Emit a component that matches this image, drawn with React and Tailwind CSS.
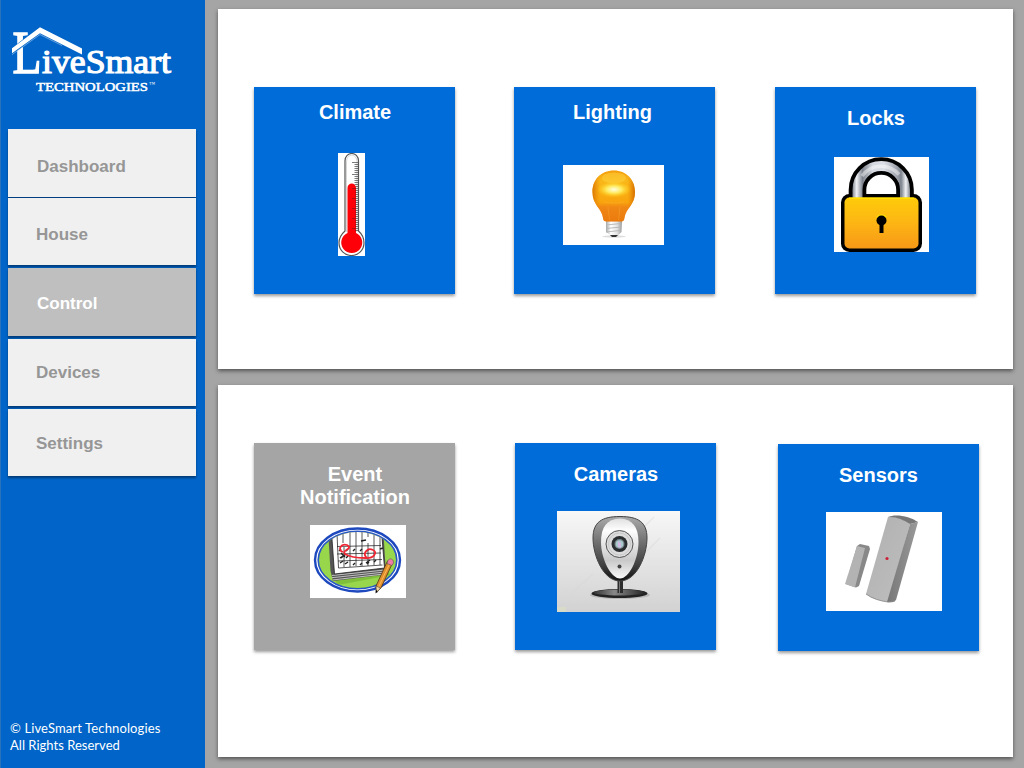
import React from "react";

const NAV = [
  { label: "Dashboard", box: "h-[68px] pt-[28px] pl-[29px]" },
  { label: "House", box: "mt-px h-[67px] pt-[27px] pl-[28px]" },
  { label: "Control", active: true, box: "mt-[3px] h-[68px] pt-[26px] pl-[29px]" },
  { label: "Devices", box: "mt-[3px] h-[67px] pt-[24px] pl-[28px]" },
  { label: "Settings", box: "mt-[3px] h-[67px] pt-[25px] pl-[28px]" },
];

function Logo() {
  return (
    <svg className="block h-[76px] w-[168px]" viewBox="8 22 168 76" fill="#fff" fontFamily="'Liberation Serif', serif">
      <text transform="translate(12.6 73) scale(0.78 1)" fontSize="61" stroke="#fff" strokeWidth="1.4">L</text>
      <path d="M10 49.500 39.5 26.500 84 47.500V56L39.5 35 10 56Z" fill="#0064c8" />
      <path d="M28.500 30H36L28.500 35Z" fill="#0064c8" />
      <path d="M12 48.300 40 27.200 82 48.500V54.500L40 33.200 12 53.300Z" />
      <path d="M12 54.600 40 34.500 62 45.500" fill="none" stroke="#cfe2f6" strokeWidth="0.5" />
      <text x="42" y="73" fontSize="34" textLength="129" lengthAdjust="spacingAndGlyphs" stroke="#fff" strokeWidth="1.2">iveSmart</text>
      <text x="36" y="91" fontSize="13.5" textLength="112" lengthAdjust="spacingAndGlyphs" stroke="#fff" strokeWidth="0.5">TECHNOLOGIES</text>
      <text x="149" y="86" fontSize="6">™</text>
    </svg>
  );
}

function Thermometer() {
  const ticks = Array.from({ length: 35 }, (_, i) => 9.5 + i * 2);
  return (
    <svg className="block h-[103px] w-[27px] bg-white" viewBox="0 0 27 103">
      <path d="M7 78V8C7 -2 20.500 -2 20.500 8V78C24 81 26 85 26 90A12.500 12.500 0 0 1 1 90C1 85 3.500 81 7 78Z" fill="#fff" stroke="#555" strokeWidth="1.200" />
      <path d="M8.500 79V9C8.500 0 19 0 19 9V79" fill="none" stroke="#bbb" strokeWidth="0.600" />
      {ticks.map((y, i) => (
        <path key={y} d={i % 6 === 0 ? `M14 ${y}H20` : `M16.500 ${y}H20`} stroke="#444" strokeWidth="0.700" />
      ))}
      <path d="M9.500 80V35C9.500 29 18 29 18 35V80A10.500 10.500 0 1 1 9.500 80Z" fill="#fd0008" />
      <g stroke="#7c151a" strokeWidth="0.600">
        {ticks.filter((y) => y > 35).map((y, i) => (
          <path key={y} d={i % 5 === 0 ? `M14 ${y}H18` : `M17 ${y}H18`} />
        ))}
      </g>
    </svg>
  );
}

function Bulb() {
  return (
    <svg className="block h-[80px] w-[101px] bg-white" viewBox="0 0 101 80">
      <defs>
        <linearGradient id="glass" x1="0" y1="0" x2="0" y2="1">
          <stop offset="0" stopColor="#f5a00c" /><stop offset="0.2" stopColor="#fcc11d" />
          <stop offset="0.62" stopColor="#fca90f" /><stop offset="0.72" stopColor="#f08418" /><stop offset="1" stopColor="#e9740d" />
        </linearGradient>
        <linearGradient id="edge">
          <stop offset="0" stopColor="#dc7704" /><stop offset="0.18" stopColor="#ef9208" stopOpacity="0.2" />
          <stop offset="0.82" stopColor="#ef9208" stopOpacity="0.2" /><stop offset="1" stopColor="#d36b02" />
        </linearGradient>
        <radialGradient id="glow">
          <stop offset="0" stopColor="#fffde0" /><stop offset="0.45" stopColor="#ffeb60" /><stop offset="1" stopColor="#ffd018" stopOpacity="0" />
        </radialGradient>
        <linearGradient id="screw">
          <stop offset="0" stopColor="#a5a6a6" /><stop offset="0.3" stopColor="#fff" /><stop offset="0.7" stopColor="#e2e2e2" /><stop offset="1" stopColor="#999" />
        </linearGradient>
      </defs>
      <ellipse cx="51" cy="71.500" rx="12" ry="1.200" fill="#ddd" />
      <path d="M43 56H59L58.500 67 55 70.500H48L43 67Z" fill="url(#screw)" />
      <path d="m43 60 15-1.500M43 63.500l15-1.500M43 67l14-1.500" stroke="#b4b4b4" strokeWidth="0.900" />
      <path d="M47 70H55L53 72H49Z" fill="#333" />
      <path d="M51 5.500C38 5.500 29.500 14.500 29.500 27C29.500 40 38.500 43 40 53C40 56 42 56.500 45 56.500H57C60 56.500 61 56 61.500 53C63 43 72 40 72 27C72 14.500 63 5.500 51 5.500Z" fill="url(#glass)" />
      <path d="M51 5.500C38 5.500 29.500 14.500 29.500 27C29.500 40 38.500 43 40 53C40 56 42 56.500 45 56.500H57C60 56.500 61 56 61.500 53C63 43 72 40 72 27C72 14.500 63 5.500 51 5.500Z" fill="url(#edge)" />
      <ellipse cx="51" cy="24.500" rx="17" ry="8" fill="url(#glow)" />
      <ellipse cx="51" cy="13" rx="12" ry="5.500" fill="#ffd33f" opacity="0.500" />
      <path d="M41 37c7 1.500 13 1.500 20 0M45 42l1.500 13M57 42l-1.500 13" fill="none" stroke="#ffc04a" strokeWidth="1" opacity="0.250" />
    </svg>
  );
}

function Padlock() {
  return (
    <svg className="block h-[95px] w-[95px] bg-white" viewBox="0 0 95 95">
      <defs>
        <linearGradient id="body" x1="0" y1="0" x2="0" y2="1">
          <stop offset="0" stopColor="#fecb09" /><stop offset="0.450" stopColor="#fdb813" /><stop offset="1" stopColor="#f79817" />
        </linearGradient>
        <linearGradient id="steel" gradientUnits="userSpaceOnUse" x1="18" y1="0" x2="76.500" y2="0">
          <stop offset="0" stopColor="#777c85" /><stop offset="0.080" stopColor="#eff1f5" /><stop offset="0.180" stopColor="#7d838d" />
          <stop offset="0.350" stopColor="#d5d8de" /><stop offset="0.550" stopColor="#dcdfe5" /><stop offset="0.750" stopColor="#a5a9b2" />
          <stop offset="0.840" stopColor="#7d838d" /><stop offset="0.920" stopColor="#eff1f5" /><stop offset="1" stopColor="#777c85" />
        </linearGradient>
      </defs>
      <rect x="7" y="37" width="81" height="58" rx="8.500" fill="#000" />
      <path d="M23.500 43V32.800A23.750 23.750 0 0 1 71 32.800V43" fill="none" stroke="#000" strokeWidth="17.600" />
      <path d="M23.500 42V32.800A23.750 23.750 0 0 1 71 32.800V42" fill="none" stroke="url(#steel)" strokeWidth="10" />
      <path d="M28 19A23.500 23.500 0 0 1 65 17.500" fill="none" stroke="#fff" strokeWidth="3.500" opacity="0.450" />
      <rect x="10.500" y="40.500" width="74" height="51" rx="5" fill="url(#body)" />
      <path d="M15 41.300H80" stroke="#ffe100" strokeWidth="1.400" />
      <path d="M43 60.500a5.500 5.500 0 0 1 9 0" fill="none" stroke="#ffe000" strokeWidth="2" />
      <circle cx="47.500" cy="63.500" r="5" /><path d="M45.500 65H49.500V76H45.500Z" />
    </svg>
  );
}

function CalendarBadge() {
  return (
    <svg className="block h-[73px] w-[96px] bg-white" viewBox="0 0 96 73">
      <defs><clipPath id="oval"><ellipse cx="47.500" cy="35" rx="38.500" ry="28" /></clipPath></defs>
      <ellipse cx="47.500" cy="35" rx="42.500" ry="31.500" fill="#fff" stroke="#1d48be" strokeWidth="2.400" />
      <ellipse cx="47.500" cy="35" rx="39.300" ry="28.800" fill="#98d64c" stroke="#2756c5" strokeWidth="1.600" />
      <g clipPath="url(#oval)">
        <path d="M24 54 76 46 81 50 28 60Z" fill="#7fbf3a" />
        <path d="M18 4 20.500 46 23 56 76 49.500 73 0Z" fill="#555" />
        <path d="m22 50.500 53-5.500M22 52.700l53-5.700M23 54.900l52-6" stroke="#ddd" strokeWidth="0.800" />
        <path d="M21 0H71L74.500 43 24.500 49Z" fill="#fff" stroke="#222" strokeWidth="0.800" />
        <g fill="none" stroke="#222" strokeWidth="0.750">
          <path d="M27 21.500 71 20.500M27 29l44-1M28 36l44-1.500M28.500 43l44-3M27 8l1.500 35M33 4V18M34 22V42M40 4V42M46 4V41M52 4V41M58 4V12M58 18V41M64 4V40M70 8V40" />
          <path d="m29 26 2-2m5 2 2-2m5 2 2-2m5 2 2-2m5 2 2-2m-29 9 3-2m3 2 2-2m5 9 2-2m5 2 2-2m5 1 2-2m5 0 2-2m4-11 3-1m-38 16 3-2m-8 1 3-2m-2-8 4 4m-4 1 5-4m20 9 4-3M51 16l5-1" strokeWidth="1.400" />
        </g>
      </g>
      <path d="M33 27C27 25 31 18 37 20C44 24 31 25 35 29C40 32 48 33 55 33C64 34 68 27 63 25C57 22 52 29 57 33" fill="none" stroke="#ef2734" strokeWidth="1.800" />
      <path d="M77.500 36 82.500 38 71 63 66.500 67 66 61Z" fill="#e0902f" stroke="#503414" strokeWidth="0.800" />
      <path d="M80 38 68.500 62" stroke="#ffb952" strokeWidth="1" />
      <path d="m66 61 4.500 2-4 5Z" fill="#f6d6a0" stroke="#333" strokeWidth="0.500" /><path d="m65.800 65 2 1-2.300 2.500Z" />
      <path d="M77.500 37C78 32.500 84 33 83.500 38L82 40.500 77 38.500Z" fill="#f27ca8" stroke="#555" strokeWidth="0.600" />
    </svg>
  );
}

function Webcam() {
  return (
    <svg className="block h-[101px] w-[123px]" viewBox="0 0 123 101">
      <defs>
        <linearGradient id="wall" x1="0" y1="0" x2="0" y2="1"><stop offset="0" stopColor="#f7f7f7" /><stop offset="1" stopColor="#d2d2d2" /></linearGradient>
        <linearGradient id="shell" x1="0" y1="0" x2="0" y2="1"><stop offset="0" stopColor="#aaa" /><stop offset="0.350" stopColor="#777" /><stop offset="0.750" stopColor="#404040" /><stop offset="1" stopColor="#111" /></linearGradient>
        <linearGradient id="face" x1="0" y1="0" x2="0" y2="1"><stop offset="0" stopColor="#e0e0e0" /><stop offset="0.200" stopColor="#fff" /><stop offset="0.700" stopColor="#c9c9c9" /><stop offset="1" stopColor="#f8f8f8" /></linearGradient>
        <linearGradient id="foot"><stop offset="0" stopColor="#333" /><stop offset="0.400" stopColor="#888" /><stop offset="1" stopColor="#222" /></linearGradient>
      </defs>
      <rect width="123" height="101" fill="url(#wall)" />
      <path d="M0 96H9V101H0Z" fill="#d8dbc7" />
      <path d="m14 83 22-20m48-17L103 27M88 15l9-9" stroke="#d8d8d8" strokeWidth="1.500" opacity="0.400" />
      <ellipse cx="63" cy="84" rx="30" ry="4" fill="#999" opacity="0.500" />
      <ellipse cx="62.500" cy="82.500" rx="28" ry="4.500" fill="#222" />
      <ellipse cx="62.500" cy="81.500" rx="26" ry="3" fill="url(#foot)" />
      <path d="M60.500 68H66V82H60.500Z" fill="#2d2d2d" /><path d="M62.500 70V82" stroke="#777" />
      <path d="M63 5.500C45 5.500 36 11 36 27C36 44 46 70 63 70C80 70 90 44 90 27C90 11 81 5.500 63 5.500Z" fill="url(#shell)" stroke="#444" strokeWidth="1" />
      <path d="M63 7.500C50 8 44 16 44 31C44 48 54 67.500 63 67.500C72 67.500 81.500 48 81.500 31C81.500 16 75 8 63 7.500Z" fill="url(#face)" />
      <circle cx="62.500" cy="33" r="13.500" fill="#dcdcdc" stroke="#444" strokeWidth="0.900" />
      <circle cx="62.500" cy="33" r="11" fill="none" stroke="#bbb" strokeWidth="0.600" />
      <circle cx="62.500" cy="33" r="8" fill="#2b2e30" /><circle cx="62.500" cy="33" r="5" fill="#77878b" />
      <circle cx="62.500" cy="33" r="3.800" fill="#aac9cd" /><path d="m61 30 3 2v5l-3-1Z" fill="#d1b9e1" />
      <circle cx="62.500" cy="55.500" r="2" fill="#444" />
    </svg>
  );
}

function DoorSensor() {
  return (
    <svg className="block h-[99px] w-[116px] bg-white" viewBox="0 0 116 99">
      <defs>
        <linearGradient id="front" x1="0" y1="0" x2="1" y2="1"><stop offset="0" stopColor="#b0b0b0" /><stop offset="1" stopColor="#bfbfbf" /></linearGradient>
        <linearGradient id="side"><stop offset="0" stopColor="#777" /><stop offset="1" stopColor="#999" /></linearGradient>
      </defs>
      <path d="M62 5C69 4 79 7 84 12L62 90C54 89 46 87 40 82Z" fill="url(#front)" />
      <path d="M84 12 92 10 70 88C68 90.500 65 90.500 61 90Z" fill="url(#side)" />
      <path d="M62 5C69 1.500 84 4 92 10L84 12C78 8 70 4.500 62 5Z" fill="#777" />
      <path d="M31 34 34 32 43 34 44 37 33 74 30 75.500 20 72Z" fill="#888" />
      <path d="M31 34 39 36 29 75.500 19 72Z" fill="#b3b3b3" />
      <path d="M40 82C46 86.500 54 89 62 90L69 89" fill="none" stroke="#888" strokeWidth="0.800" />
      <circle cx="61" cy="46.500" r="1.600" fill="#cc2036" />
    </svg>
  );
}

const TOP = [
  { title: "Climate", Art: Thermometer, box: "pt-[14px]", art: "mt-[29px] ml-[84px]" },
  { title: "Lighting", Art: Bulb, box: "ml-[59px] pt-[14px]", art: "mt-[41px] ml-[49px]", text: "pr-[4px]" },
  { title: "Locks", Art: Padlock, box: "ml-[60px] pt-[20px]", art: "mt-[27px] ml-[59px]" },
];
const BOTTOM = [
  { title: "Event\nNotification", Art: CalendarBadge, off: true, box: "pt-[20px]", art: "mt-[16px] ml-[56px]" },
  { title: "Cameras", Art: Webcam, box: "ml-[60px] pt-[20px]", art: "mt-[25px] ml-[42px]" },
  { title: "Sensors", Art: DoorSensor, box: "ml-[62px] mt-px pt-[20px]", art: "mt-[25px] ml-[48px]", text: "" },
];

function Tile({ title, Art, box, art, text = "pl-px", off }) {
  return (
    <button className={`flex h-[207px] w-[201px] shrink-0 flex-col items-stretch justify-start text-left shadow-[0_2px_3px_rgba(0,0,0,0.4)] ${off ? "bg-[#a5a5a5]" : "bg-[#006cd9]"} ${box}`}>
      <div className={`text-center text-[20px] leading-[23px] font-bold whitespace-pre-line text-white ${text}`}>{title}</div>
      <div className={art}><Art /></div>
    </button>
  );
}

export default function App() {
  return (
    <div className="flex h-[768px] w-[1024px] overflow-hidden bg-[#a5a5a5] font-['Liberation_Sans',sans-serif]">
      <aside className="flex w-[205px] shrink-0 flex-col border-l border-[#2b72bd] bg-[#0064c8] pt-[22px] pl-[7px]">
        <Logo />
        <nav className="mt-[31px] flex w-[188px] flex-col">
          {NAV.map(({ label, active, box }) => (
            <a key={label} className={`block text-[17px] leading-[20px] font-bold shadow-[0_2px_2px_rgba(0,0,0,0.4)] ${active ? "bg-[#bfbfbf] text-white" : "bg-[#f0f0f0] text-[#969696]"} ${box}`}>{label}</a>
          ))}
        </nav>
        <footer className="mt-auto mb-[14px] pl-[2px] font-['Lato',sans-serif] text-[13px] leading-[17px] tracking-[0.13px] text-white">
          <div>© LiveSmart Technologies</div>
          <div className="tracking-[0.02px]">All Rights Reserved</div>
        </footer>
      </aside>
      <main className="flex flex-col gap-4 pt-[9px] pl-[13px]">
        <section className="flex h-[360px] w-[795px] items-start bg-white pt-[78px] pl-[36px] shadow-[0_2px_4px_rgba(0,0,0,0.5)]">
          {TOP.map((t) => <Tile key={t.title} {...t} />)}
        </section>
        <section className="flex h-[372px] w-[795px] items-start bg-white pt-[58px] pl-[36px] shadow-[0_2px_4px_rgba(0,0,0,0.5)]">
          {BOTTOM.map((t) => <Tile key={t.title} {...t} />)}
        </section>
      </main>
    </div>
  );
}
